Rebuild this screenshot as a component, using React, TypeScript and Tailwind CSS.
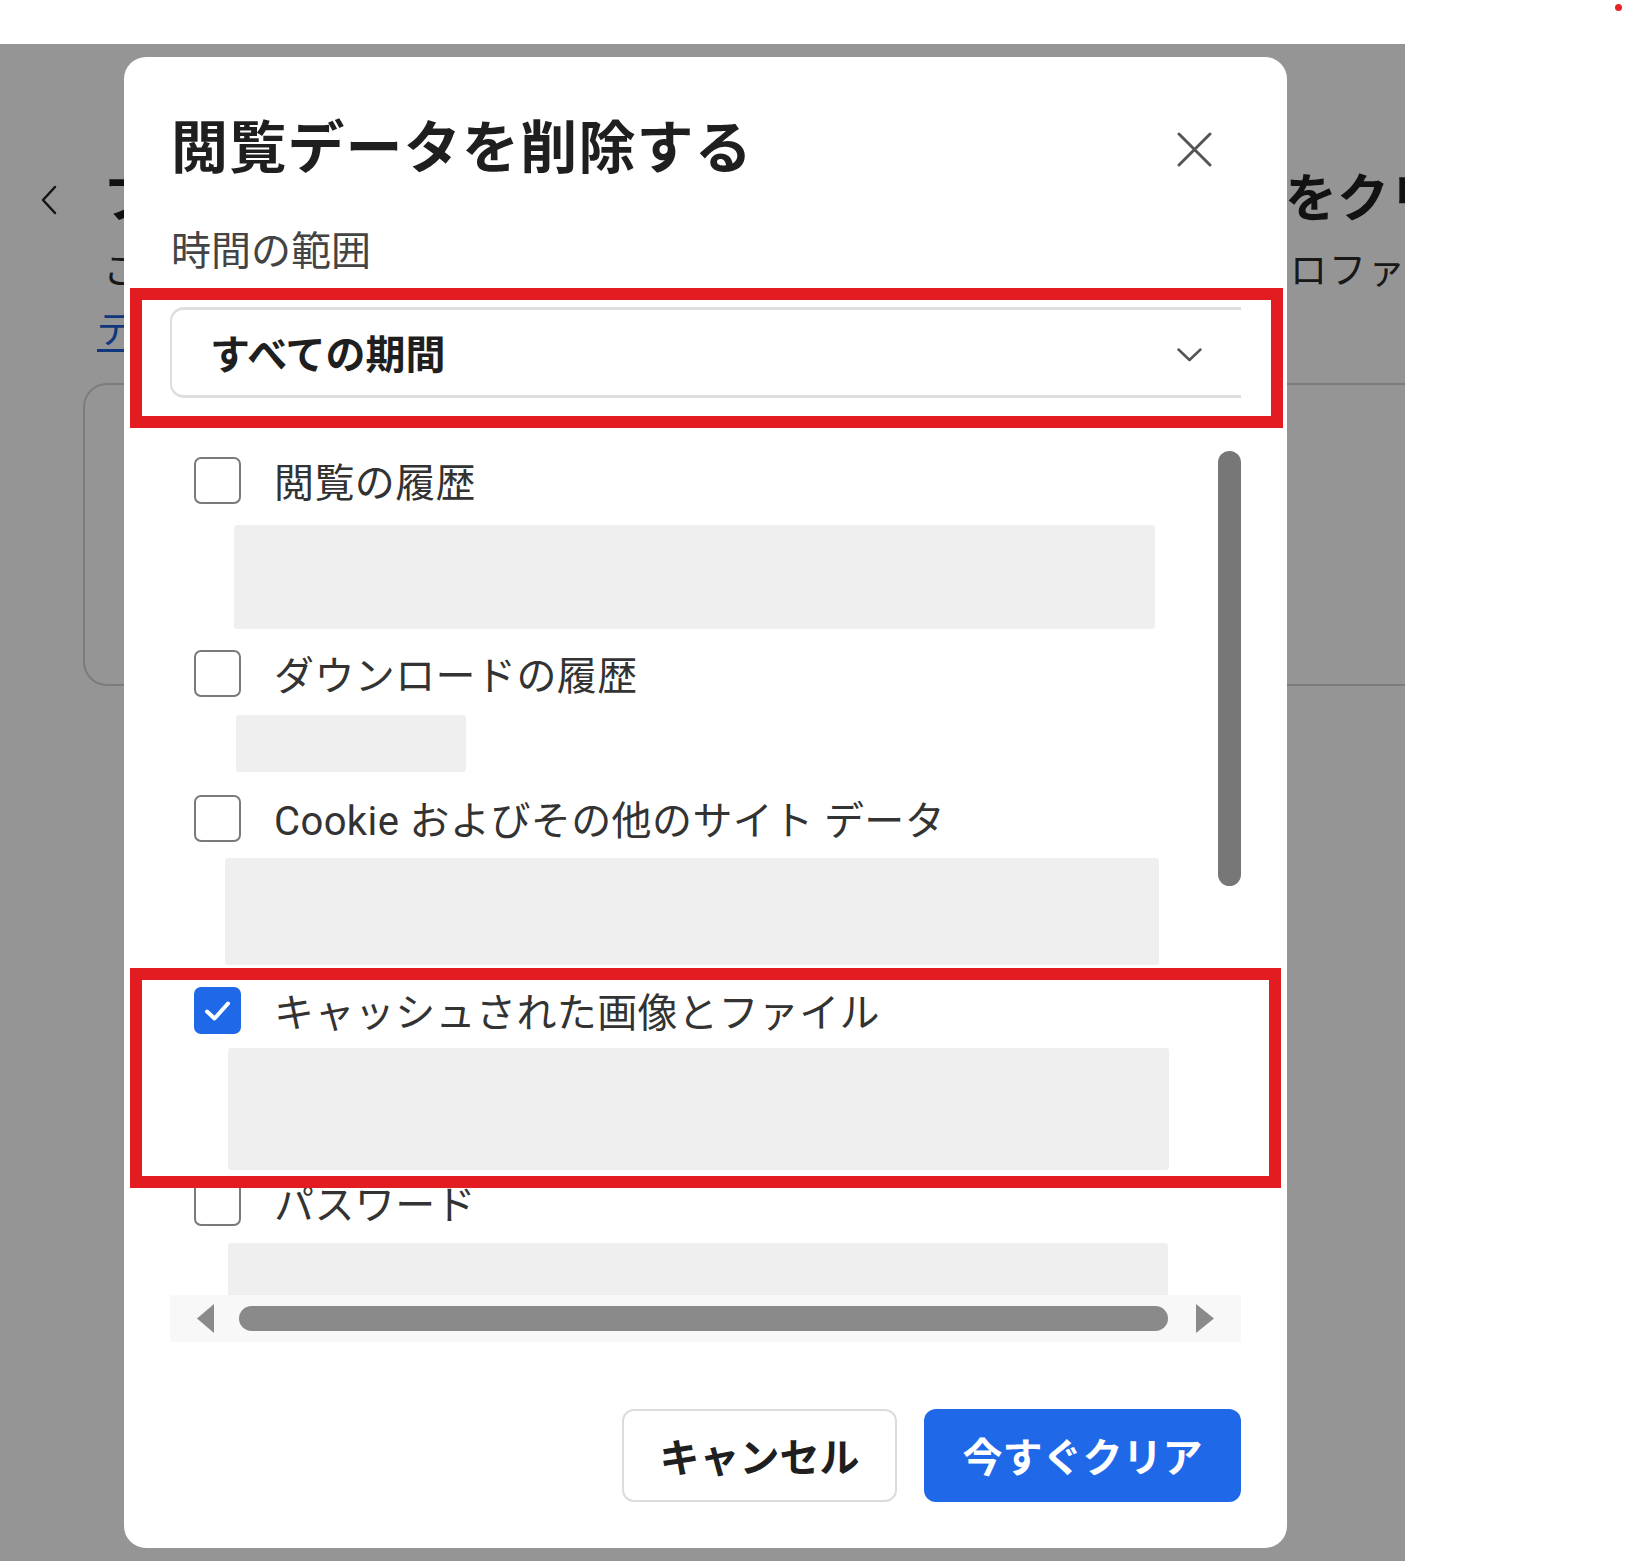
import React from "react";

type Item = {
  label: string;
  checked: boolean;
  row: string;
  block: string;
};

const items: Item[] = [
  { label: "閲覧の履歴", checked: false, row: "mt-[22px]", block: "mt-[21px] ml-[64px] w-[921px] h-[104px]" },
  { label: "ダウンロードの履歴", checked: false, row: "mt-[21px]", block: "mt-[18px] ml-[66px] w-[230px] h-[57px]" },
  { label: "Cookie およびその他のサイト データ", checked: false, row: "mt-[23px]", block: "mt-[16px] ml-[55px] w-[934px] h-[107px]" },
  { label: "キャッシュされた画像とファイル", checked: true, row: "mt-[22px]", block: "mt-[14px] ml-[58px] w-[941px] h-[122px]" },
  { label: "パスワード", checked: false, row: "mt-[9px]", block: "mt-[17px] ml-[58px] w-[940px] h-[60px]" },
];

function CheckBox({ checked }: { checked: boolean }) {
  if (checked) {
    return (
      <div className="w-[47px] h-[47px] shrink-0 rounded-[7px] bg-[#1f69e8] flex items-center justify-center">
        <svg width="47" height="47" viewBox="0 0 47 47">
          <path d="M13 24.5 L20.5 31.5 L34 16.5" fill="none" stroke="#ffffff" strokeWidth="4" strokeLinecap="round" strokeLinejoin="round" />
        </svg>
      </div>
    );
  }
  return <div className="w-[47px] h-[47px] shrink-0 rounded-[7px] border-[2.5px] border-[#7a7a7a] bg-white" />;
}

export default function App() {
  return (
    <div className="relative w-[1625px] h-[1561px] bg-white overflow-hidden font-[family-name:Roboto,'Noto_Sans_CJK_JP',sans-serif]">
      {/* top white strip */}
      <div className="h-[44px] flex justify-end pt-[4px] pr-[3px]">
        <div className="w-[7px] h-[7px] rounded-full bg-[#e62424]" />
      </div>

      <div className="flex">
        {/* page behind the modal */}
        <div className="relative w-[1405px] h-[1517px] overflow-hidden bg-white shrink-0">
          <div className="flex items-center pt-[124px] pl-[40px] h-[188px]">
            <svg width="17" height="30" viewBox="0 0 17 30" className="shrink-0">
              <path d="M15 2 L3 15 L15 28" fill="none" stroke="#222" strokeWidth="2.5" strokeLinecap="round" strokeLinejoin="round" />
            </svg>
            <span className="ml-[47px] w-[1181px] shrink-0 whitespace-nowrap overflow-hidden text-[52px] leading-[64px] font-bold text-[#1f1f1f]">ブラウザの閲覧データ</span>
            <span className="shrink-0 whitespace-nowrap text-[52px] leading-[64px] font-bold text-[#1f1f1f]">をクリア</span>
          </div>
          <div className="flex mt-[17px] pl-[103px]">
            <span className="w-[1187px] shrink-0 whitespace-nowrap overflow-hidden text-[37px] leading-[46px] text-[#2a2a2a]">この操作を行うと、</span>
            <span className="shrink-0 whitespace-nowrap text-[37px] leading-[46px] text-[#2a2a2a] tracking-[2px]">ロファイル</span>
          </div>
          <div className="mt-[13px] pl-[97px]">
            <span className="text-[37px] leading-[46px] text-[#1a5fd6] underline underline-offset-[6px]">データの詳細</span>
          </div>
          <div className="mt-[29px] ml-[83px] w-[1400px] h-[303px] rounded-[24px] border-2 border-[#d4d4d4] bg-white" />
          <div className="absolute inset-0 bg-[rgba(0,0,0,0.415)]" />
        </div>
        <div className="flex-1 bg-white" />
      </div>

      {/* modal dialog */}
      <div className="absolute left-[124px] top-[57px] w-[1163px] h-[1491px] rounded-[22px] bg-white px-[46px] pt-[54px] text-[#202124]">
        <div className="flex items-start justify-between h-[68px]">
          <h1 className="ml-[1px] pt-[4px] text-[57px] leading-[68px] tracking-[1.2px] font-bold text-[#1f1f1f] whitespace-nowrap">閲覧データを削除する</h1>
          <div className="mt-[21px] mr-[29px] w-[35px] h-[35px]">
            <svg width="35" height="35" viewBox="0 0 35 35">
              <path d="M2 2 L33 33 M33 2 L2 33" stroke="#555" strokeWidth="3" strokeLinecap="round" />
            </svg>
          </div>
        </div>

        <div className="mt-[47px] ml-[1px] pt-[2px] h-[48px] text-[40px] leading-[48px] text-[#444]">時間の範囲</div>

        <div className="mt-[33px] h-[91px] flex items-center justify-between border-l-2 border-t-[3px] border-b-[3px] border-[#dedede] rounded-l-[14px] pl-[38px] pr-[39px]">
          <span className="pt-[6px] text-[40px] leading-[48px] font-bold text-[#1f1f1f]">すべての期間</span>
          <svg width="25" height="14" viewBox="0 0 25 14" className="mt-[4px]">
            <path d="M1.5 1.5 L12.5 12 L23.5 1.5" fill="none" stroke="#555" strokeWidth="2.5" strokeLinecap="round" strokeLinejoin="round" />
          </svg>
        </div>

        {/* scrollable list */}
        <div className="mt-[37px] h-[860px] flex overflow-hidden">
          <div className="w-[1048px] shrink-0 h-[860px] overflow-hidden">
            {items.map((it) => (
              <div key={it.label}>
                <div className={`flex items-center h-[47px] pl-[24px] ${it.row}`}>
                  <CheckBox checked={it.checked} />
                  <span className="ml-[33px] pt-[6px] text-[40px] leading-[47px] tracking-[0.4px] text-[#333] whitespace-nowrap">{it.label}</span>
                </div>
                <div className={`bg-[#efefef] rounded-[3px] ${it.block}`} />
              </div>
            ))}
          </div>
          <div className="w-[23px] pt-[16px]">
            <div className="w-[23px] h-[435px] rounded-full bg-[#777777]" />
          </div>
        </div>

        {/* horizontal scrollbar */}
        <div className="h-[47px] bg-[#f8f8f8] flex items-center pl-[25px]">
          <svg width="19" height="29" viewBox="0 0 19 29" className="shrink-0">
            <polygon points="19,0 19,29 2,14.5" fill="#8a8a8a" />
          </svg>
          <div className="ml-[25px] w-[929px] h-[25px] rounded-full bg-[#8a8a8a] shrink-0" />
          <svg width="20" height="29" viewBox="0 0 20 29" className="ml-[28px] shrink-0">
            <polygon points="0,0 0,29 18,14.5" fill="#8a8a8a" />
          </svg>
        </div>

        {/* buttons */}
        <div className="mt-[67px] flex justify-end gap-[27px]">
          <button className="w-[275px] h-[93px] pt-[6px] rounded-[12px] border-2 border-[#dadce0] bg-white text-[40px] font-bold text-[#1f1f1f]">キャンセル</button>
          <button className="w-[317px] h-[93px] pt-[6px] rounded-[12px] bg-[#1f69e8] text-[40px] font-bold text-white">今すぐクリア</button>
        </div>

        {/* red annotation boxes */}
        <div className="absolute left-[6px] top-[231px] w-[1153px] h-[140px] border-[12px] border-[#e31c22]" />
        <div className="absolute left-[6px] top-[911px] w-[1151px] h-[220px] border-[12px] border-[#e31c22]" />
      </div>
    </div>
  );
}
